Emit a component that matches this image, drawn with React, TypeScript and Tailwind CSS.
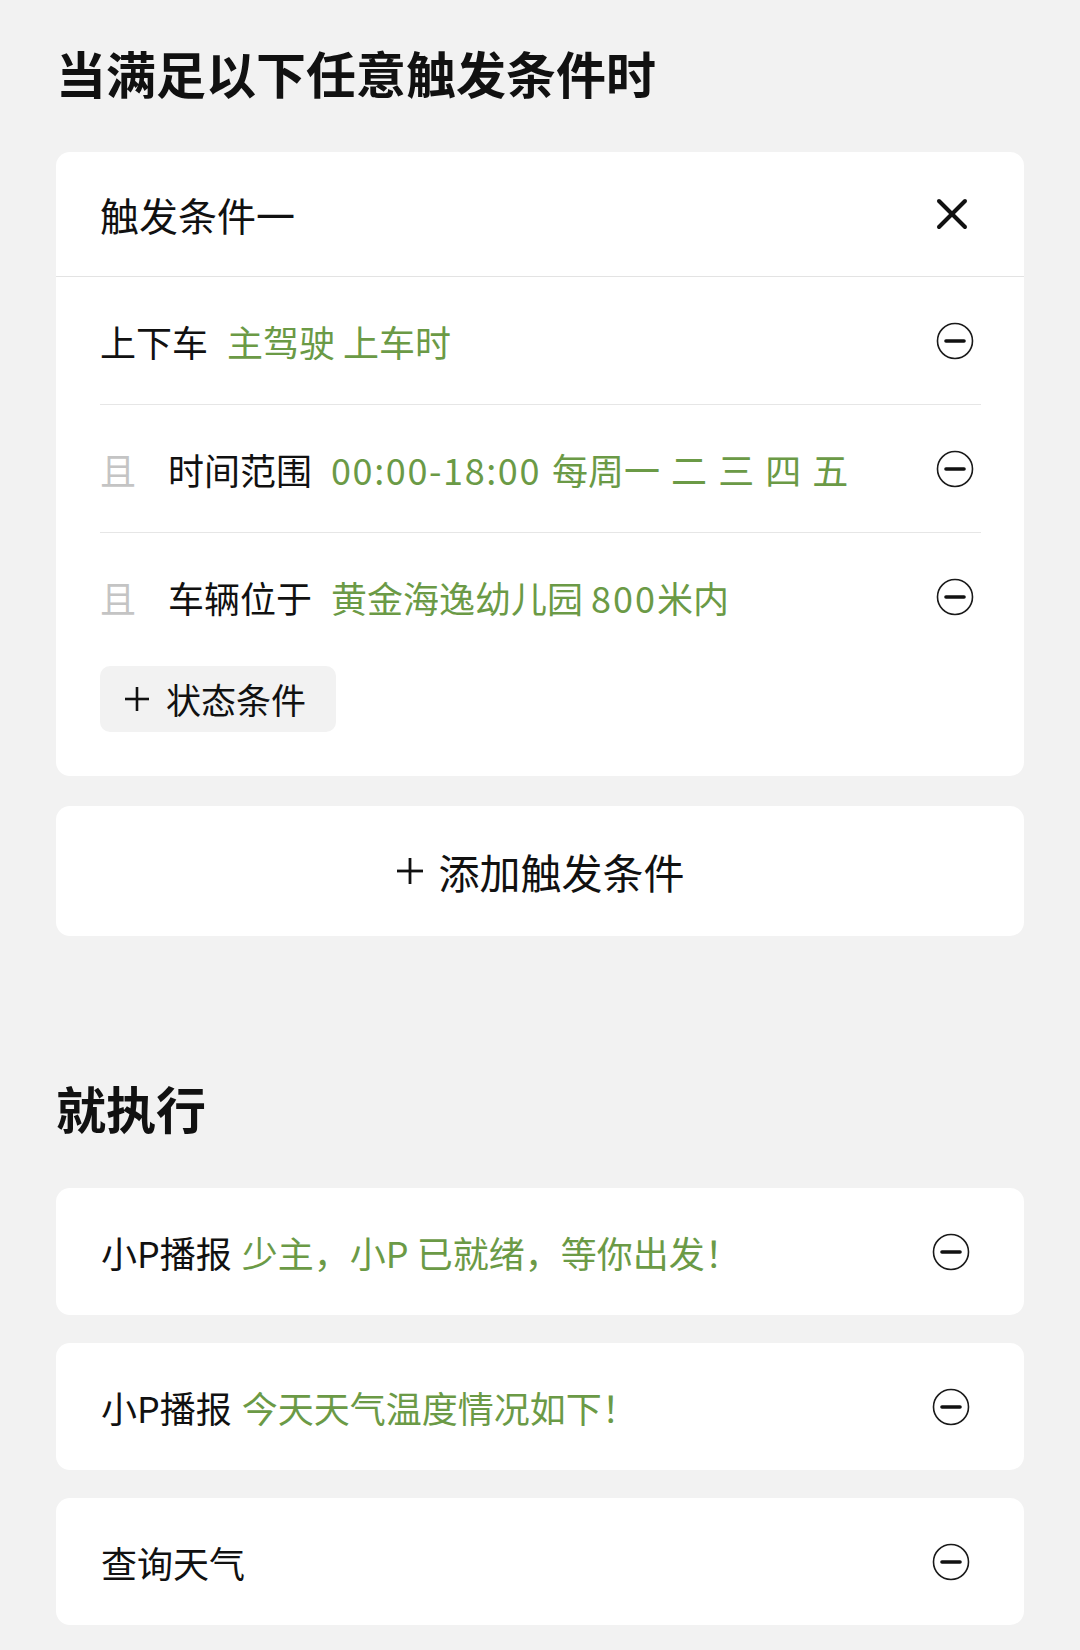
import React from "react";

const GREEN = "text-[#6b9a46]";

function MinusIcon() {
  return (
    <svg width="38" height="38" viewBox="0 0 38 38" className="shrink-0">
      <circle cx="19" cy="19" r="17.5" fill="none" stroke="#1a1a1a" strokeWidth="1.6" />
      <line x1="10" y1="19" x2="28" y2="19" stroke="#111" strokeWidth="3.6" strokeLinecap="round" />
    </svg>
  );
}

function CloseIcon() {
  return (
    <svg width="32" height="32" viewBox="0 0 32 32" className="shrink-0">
      <line x1="3" y1="3" x2="29" y2="29" stroke="#111" strokeWidth="4" strokeLinecap="round" />
      <line x1="29" y1="3" x2="3" y2="29" stroke="#111" strokeWidth="4" strokeLinecap="round" />
    </svg>
  );
}

function CondRow({
  prefix,
  label,
  value,
  border,
}: {
  prefix?: boolean;
  label: string;
  value: React.ReactNode;
  border?: boolean;
}) {
  return (
    <div
      className={`flex h-[128px] items-center justify-between ${
        border ? "border-b border-[#e6e6e6]" : ""
      }`}
    >
      <div className="flex items-center whitespace-pre text-[36px] leading-[44px] text-[#111]">
        {prefix && <span className="mr-[32px] text-[#c4c4c4]">且</span>}
        <span>{label}</span>
        <span className={`ml-[19px] ${GREEN}`}>{value}</span>
      </div>
      <div className="mr-[7px] flex">
        <MinusIcon />
      </div>
    </div>
  );
}

function ActionCard({ label, value }: { label: string; value?: string }) {
  return (
    <div className="flex h-[127px] items-center justify-between rounded-[14px] bg-white pl-[45px] pr-[54px]">
      <div className="flex items-center text-[36px] leading-[44px] text-[#111]">
        <span>{label}</span>
        {value && <span className={`ml-[10px] ${GREEN}`}>{value}</span>}
      </div>
      <MinusIcon />
    </div>
  );
}

export default function App() {
  return (
    <div
      className="min-h-[1650px] w-[1080px] bg-[#f2f2f2] px-[56px] pb-[24px] pt-[42px]"
      style={{ fontFamily: '"Noto Sans CJK SC", "Noto Sans", sans-serif' }}
    >
      <h1 className="text-[50px] font-semibold leading-[60px] text-[#111]">当满足以下任意触发条件时</h1>

      <div className="mt-[50px] rounded-[14px] bg-white">
        <div className="flex h-[125px] items-center justify-between border-b border-[#e3e3e3] pl-[44px] pr-[56px]">
          <span className="text-[39px] leading-[46px] text-[#111]">触发条件一</span>
          <CloseIcon />
        </div>
        <div className="px-[44px] pb-[44px] pr-[43px]">
          <CondRow label="上下车" value="主驾驶 上车时" border />
          <CondRow
            prefix
            label="时间范围"
            value={
              <>
                <span className="tracking-[1.6px]">00:00-18:00</span>
                <span className="[word-spacing:3px]"> 每周一 二 三 四 五</span>
              </>
            }
            border
          />
          <CondRow
            prefix
            label="车辆位于"
            value={
              <>
                黄金海逸幼儿园 <span className="tracking-[2px]">800</span>米内
              </>
            }
          />
          <div className="mt-[5px] flex h-[66px] w-[236px] items-center rounded-[10px] bg-[#f2f2f2] pl-[24px]">
            <svg width="26" height="26" viewBox="0 0 26 26" className="shrink-0">
              <line x1="13" y1="1" x2="13" y2="25" stroke="#111" strokeWidth="2.6" />
              <line x1="1" y1="13" x2="25" y2="13" stroke="#111" strokeWidth="2.6" />
            </svg>
            <span className="ml-[16px] text-[35px] leading-[44px] text-[#111]">状态条件</span>
          </div>
        </div>
      </div>

      <div className="mt-[30px] flex h-[130px] items-center justify-center rounded-[14px] bg-white">
        <svg width="28" height="28" viewBox="0 0 28 28" className="shrink-0">
          <line x1="14" y1="1" x2="14" y2="27" stroke="#111" strokeWidth="2.8" />
          <line x1="1" y1="14" x2="27" y2="14" stroke="#111" strokeWidth="2.8" />
        </svg>
        <span className="ml-[15px] text-[41px] leading-[48px] text-[#111]">添加触发条件</span>
      </div>

      <h2 className="mt-[141px] text-[50px] font-semibold leading-[60px] text-[#111]">就执行</h2>

      <div className="mt-[51px] flex flex-col gap-[28px]">
        <ActionCard label="小P播报" value="少主，小P 已就绪，等你出发！" />
        <ActionCard label="小P播报" value="今天天气温度情况如下！" />
        <ActionCard label="查询天气" />
      </div>
    </div>
  );
}
